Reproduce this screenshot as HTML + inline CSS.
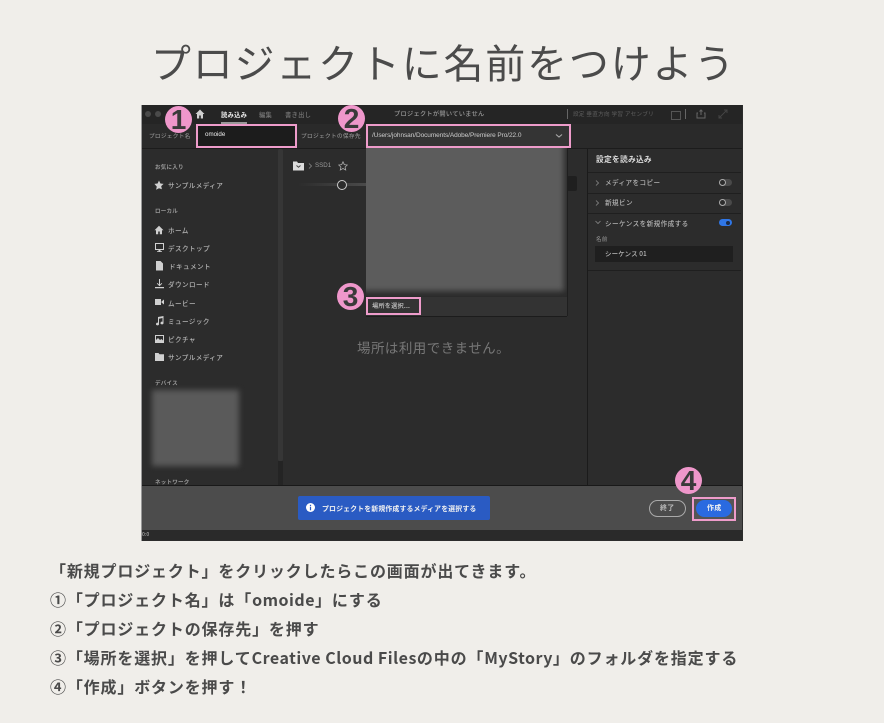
<!DOCTYPE html>
<html lang="ja"><head><meta charset="utf-8"><style>
html,body{margin:0;padding:0}
body{width:884px;height:723px;background:#f0eeea;position:relative;overflow:hidden;font-family:"Noto Sans CJK JP","Liberation Sans",sans-serif}
.a{position:absolute;white-space:nowrap}
#title{left:0;width:884px;top:31px;text-align:center;font-size:40px;line-height:60px;letter-spacing:1.8px;color:#4b4b4b;font-weight:400;text-indent:3px}
.l{left:50px;font-size:16px;line-height:22px;font-weight:700;color:#4a4a4a;letter-spacing:.84px}
.l b{letter-spacing:.5px;font-weight:700}
#w{position:absolute;left:141px;top:105px;width:602px;height:436px;background:#2c2c2c;overflow:hidden;border-left:1px solid #999;box-sizing:border-box}
#in{position:absolute;left:-142px;top:-105px;width:884px;height:723px;filter:blur(.35px)}
.r{position:absolute}
.t{position:absolute;white-space:nowrap;font-size:6.6px;line-height:12px;color:#b4b4b4;letter-spacing:.4px;font-weight:500}
.h{font-size:5.5px;font-weight:700;color:#999;letter-spacing:.25px}
.pk{position:absolute;border:2.5px solid #ee9ccb;box-sizing:border-box}
.c{position:absolute;width:27px;height:27px;border-radius:50%;background:#ef97cb;color:#3a3a3a;font:700 28px/27px "Liberation Sans",sans-serif;text-align:center}
.ic{position:absolute;fill:#d0d0d0}
.tg{position:absolute;width:13px;height:7px;border-radius:4px;background:#4a4a4a}
.tg i{position:absolute;left:0;top:0;width:7px;height:7px;box-sizing:border-box;border:1px solid #aaa;border-radius:50%;background:#2c2c2c}
.ch{position:absolute;fill:none;stroke:#888;stroke-width:.8}
</style></head><body>
<div class="a" id="title">プロジェクトに名前をつけよう</div>

<div id="w"><div id="in">
<div class="r" style="left:142px;top:105px;width:600px;height:19px;background:#252525"></div>
<div class="r" style="left:142px;top:124px;width:600px;height:24px;background:#2a2a2a;border-bottom:1px solid #1c1c1c"></div>
<div class="r" style="left:145px;top:111px;width:6px;height:6px;border-radius:50%;background:#4a4a4a"></div>
<div class="r" style="left:155px;top:111px;width:6px;height:6px;border-radius:50%;background:#4a4a4a"></div>
<svg class="ic" style="left:195px;top:109px" width="10" height="10" viewBox="0 0 10 10"><path d="M5 .5L.5 5H2v4.5h2.2V6.500h1.600v3H8V5h1.500z"/></svg>
<div class="t" style="left:221px;top:109px;font-size:6.300px;letter-spacing:.25px;color:#eee;font-weight:700">読み込み</div>
<div class="r" style="left:221px;top:122px;width:26px;height:2px;background:#999"></div>
<div class="t" style="left:259px;top:109px;font-size:6.300px;letter-spacing:.25px;color:#777">編集</div>
<div class="t" style="left:285px;top:109px;font-size:6.300px;letter-spacing:.25px;color:#777">書き出し</div>
<div class="t" style="left:394px;top:108px;font-size:6.200px;letter-spacing:.3px;color:#999">プロジェクトが開いていません</div>
<div class="r" style="left:567px;top:109px;width:1px;height:10px;background:#666"></div>
<div class="t" style="left:573px;top:108px;font-size:5.600px;letter-spacing:.3px;color:#555">設定 垂直方向 学習 アセンブリ</div>
<div class="r" style="left:671px;top:111px;width:8px;height:7px;border:1px solid #555"></div>
<div class="r" style="left:685px;top:109px;width:1px;height:10px;background:#666"></div>
<svg style="position:absolute;left:696px;top:109px" width="10" height="10" viewBox="0 0 10 10" fill="none" stroke="#666"><path d="M2 4H1v5h8V4H8M5 6V1M3.500 2.500L5 1l1.500 1.500"/></svg>
<svg style="position:absolute;left:718px;top:109px" width="10" height="10" viewBox="0 0 10 10" fill="none" stroke="#444"><path d="M1 9L9 1M6 1h3v3M1 6v3h3"/></svg>

<div class="t" style="left:149px;top:130px;font-size:5.700px;letter-spacing:.25px;color:#8a8a8a">プロジェクト名</div>
<div class="r" style="left:198px;top:126px;width:97px;height:20px;background:#1c1c1c"></div>
<div class="t" style="left:205px;top:129px;font-size:6.200px;color:#eee;letter-spacing:0;font-family:'Liberation Sans',sans-serif">omoide</div>
<div class="t" style="left:301px;top:130px;font-size:5.700px;letter-spacing:.3px;color:#8a8a8a">プロジェクトの保存先</div>
<div class="r" style="left:368px;top:126px;width:201px;height:20px;background:#343434"></div>
<div class="t" style="left:372px;top:130px;font-size:6.500px;color:#ccc;letter-spacing:-.08px;font-family:'Liberation Sans',sans-serif">/Users/johnsan/Documents/Adobe/Premiere Pro/22.0</div>
<svg style="position:absolute;left:555px;top:133px" width="8" height="6" viewBox="0 0 8 6" fill="none" stroke="#aaa" stroke-width="1.100"><path d="M1 1.500l3 2.500 3-2.500"/></svg>

<!-- sidebar -->
<div class="r" style="left:278px;top:149px;width:5px;height:312px;background:#363636;border-radius:2px"></div>
<div class="r" style="left:278px;top:461px;width:5px;height:25px;background:#242424"></div>
<div class="t h" style="left:155px;top:161px">お気に入り</div>
<svg class="ic" style="left:154px;top:180px" width="10" height="10" viewBox="0 0 10 10"><path d="M5 .5l1.400 3 3.200.4-2.400 2.200.7 3.200L5 8.200 2.100 9.800l.7-3.200L.4 3.900l3.200-.4z"/></svg>
<div class="t" style="left:168px;top:179px">サンプルメディア</div>
<div class="t h" style="left:155px;top:205px">ローカル</div>
<svg class="ic" style="left:154px;top:225px" width="10" height="10" viewBox="0 0 10 10"><path d="M5 .8L.5 5.200H2v4h2.200V6.500h1.600v2.700H8v-4h1.500z"/></svg>
<div class="t" style="left:168px;top:224px">ホーム</div>
<svg class="ic" style="left:155px;top:243px" width="9" height="10" viewBox="0 0 9 10"><path d="M0 0h9v7H5.500v1.200H7V9H2v-.8h1.500V7H0zm1 1v5h7V1z"/></svg>
<div class="t" style="left:168px;top:242px">デスクトップ</div>
<svg class="ic" style="left:156px;top:261px" width="7" height="10" viewBox="0 0 7 10"><path d="M0 0h4.500L7 2.500V9.500H0z"/></svg>
<div class="t" style="left:169px;top:260px">ドキュメント</div>
<svg class="ic" style="left:155px;top:279px" width="9" height="10" viewBox="0 0 9 10"><path d="M4 0h1v5.500l1.500-1.500.7.600L4.500 7.300 1.800 4.600l.7-.6L4 5.500zM0 8h9v1.200H0z"/></svg>
<div class="t" style="left:168px;top:278px">ダウンロード</div>
<svg class="ic" style="left:155px;top:298px" width="9" height="8" viewBox="0 0 9 8"><path d="M0 1h6v6H0zM6.500 3.500L9 1.500v5L6.500 4.500z"/></svg>
<div class="t" style="left:168px;top:297px">ムービー</div>
<svg class="ic" style="left:155px;top:316px" width="9" height="10" viewBox="0 0 9 10"><path d="M3 1l5.500-1v7a1.500 1.300 0 1 1-1-1.200V2L4 2.700V8a1.500 1.300 0 1 1-1-1.200z"/></svg>
<div class="t" style="left:168px;top:315px">ミュージック</div>
<svg class="ic" style="left:155px;top:335px" width="9" height="8" viewBox="0 0 9 8"><path d="M0 0h9v8H0zm1 1v4l2-2 2 2 1.500-1L8 5.500V1z"/></svg>
<div class="t" style="left:168px;top:333px">ピクチャ</div>
<svg class="ic" style="left:155px;top:353px" width="9" height="8" viewBox="0 0 9 8"><path d="M0 0h3.500l1 1.200H9V8H0z"/></svg>
<div class="t" style="left:168px;top:351px">サンプルメディア</div>
<div class="t h" style="left:155px;top:377px">デバイス</div>
<div class="r" style="left:152px;top:390px;width:87px;height:76px;background:#5a5a5a;filter:blur(3px)"></div>
<div class="t h" style="left:155px;top:476px">ネットワーク</div>

<!-- main -->
<svg style="position:absolute;left:293px;top:161px" width="11" height="10" viewBox="0 0 11 10"><path d="M0 .5h4l1 1.500h6v7.500H0z" fill="#ddd"/><path d="M3.500 4.500l2 1.700 2-1.700" stroke="#444" fill="none"/></svg>
<svg class="ch" style="left:308px;top:163px" width="5" height="6" viewBox="0 0 5 6"><path d="M1 .5L3.500 3 1 5.500"/></svg>
<div class="t" style="left:315px;top:160px;font-size:6.200px;letter-spacing:0;color:#999;font-family:'Liberation Sans',sans-serif">SSD1</div>
<svg style="position:absolute;left:338px;top:161px" width="10" height="10" viewBox="0 0 10 10" fill="none" stroke="#aaa" stroke-width=".8"><path d="M5 .8l1.300 2.800 3 .4-2.200 2 .6 3L5 7.500 2.300 9l.6-3-2.200-2 3-.4z"/></svg>
<div class="r" style="left:298px;top:183px;width:68px;height:3px;background:linear-gradient(90deg,#2c2c2c,#4a4a4a)"></div>
<div class="r" style="left:337px;top:180px;width:8px;height:8px;border:1px solid #ccc;border-radius:50%;background:#2c2c2c"></div>
<div class="r" style="left:567px;top:176px;width:10px;height:15px;background:#1f1f1f;border-radius:2px"></div>
<div class="t" style="left:357px;top:337px;font-size:13.500px;line-height:20px;letter-spacing:.45px;color:#777;font-weight:400">場所は利用できません。</div>

<!-- popup -->
<div class="r" style="left:366px;top:148px;width:201px;height:149px;background:#2b2b2b;overflow:hidden"><div class="r" style="left:-6px;top:-10px;width:204px;height:153px;background:#5c5c5c;filter:blur(3px)"></div></div>
<div class="r" style="left:366px;top:297px;width:201px;height:19px;background:#333;border-bottom:1px solid #1c1c1c"></div>
<div class="r" style="left:567px;top:148px;width:1px;height:168px;background:#1f1f1f"></div>
<div class="t" style="left:372px;top:300px;font-size:6.200px;color:#ccc;letter-spacing:.2px">場所を選択...</div>

<!-- right panel -->
<div class="r" style="left:587px;top:149px;width:1px;height:337px;background:#1b1b1b"></div>
<div class="t" style="left:596px;top:154px;font-size:7.700px;letter-spacing:.3px;font-weight:700;color:#ddd">設定を読み込み</div>
<div class="r" style="left:588px;top:172px;width:153px;height:1px;background:#1f1f1f"></div>
<svg class="ch" style="left:595px;top:180px" width="5" height="6" viewBox="0 0 5 6"><path d="M1 .5L3.500 3 1 5.500"/></svg>
<div class="t" style="left:605px;top:176px;color:#b4b4b4">メディアをコピー</div>
<div class="tg" style="left:719px;top:179px"><i></i></div>
<div class="r" style="left:588px;top:193px;width:153px;height:1px;background:#1f1f1f"></div>
<svg class="ch" style="left:595px;top:200px" width="5" height="6" viewBox="0 0 5 6"><path d="M1 .5L3.500 3 1 5.500"/></svg>
<div class="t" style="left:605px;top:196px;color:#b4b4b4">新規ビン</div>
<div class="tg" style="left:719px;top:199px"><i></i></div>
<div class="r" style="left:588px;top:213px;width:153px;height:1px;background:#1f1f1f"></div>
<svg style="position:absolute;left:595px;top:220px" width="6" height="5" viewBox="0 0 6 5" fill="none" stroke="#888" stroke-width=".8"><path d="M.5 1l2.500 2.500L5.500 1"/></svg>
<div class="t" style="left:605px;top:217px;color:#b4b4b4">シーケンスを新規作成する</div>
<div class="tg" style="left:719px;top:219px;background:#2f76e6"><i style="left:7px;top:1.500px;width:4px;height:4px;background:#1b2a44;border:0"></i></div>
<div class="t" style="left:596px;top:233px;font-size:5.500px;color:#888">名前</div>
<div class="r" style="left:595px;top:246px;width:138px;height:16px;background:#1f1f1f"></div>
<div class="t" style="left:605px;top:247px;font-size:6.500px;letter-spacing:.1px;color:#bbb">シーケンス 01</div>
<div class="r" style="left:588px;top:270px;width:153px;height:1px;background:#1f1f1f"></div>

<!-- bottom -->
<div class="r" style="left:142px;top:485px;width:600px;height:1px;background:#191919"></div>
<div class="r" style="left:142px;top:486px;width:600px;height:44px;background:#4c4c4c"></div>
<div class="r" style="left:142px;top:530px;width:600px;height:10px;background:#2a2a2a"></div>
<div class="t" style="left:142px;top:530px;font-size:5px;line-height:10px;color:#aaa;letter-spacing:0">0:0</div>
<div class="r" style="left:298px;top:496px;width:192px;height:24px;background:#2a5bc3;border-radius:2px"></div>
<svg style="position:absolute;left:306px;top:503px" width="9" height="9" viewBox="0 0 9 9"><circle cx="4.500" cy="4.500" r="4.500" fill="#fff"/><rect x="3.900" y="3.700" width="1.200" height="3.600" fill="#2a5bc3"/><rect x="3.900" y="1.800" width="1.200" height="1.200" fill="#2a5bc3"/></svg>
<div class="t" style="left:322px;top:502px;font-size:6.900px;font-weight:700;color:#f2f2f2;letter-spacing:.15px">プロジェクトを新規作成するメディアを選択する</div>
<div class="r" style="left:649px;top:500px;width:37px;height:17px;box-sizing:border-box;border:1px solid #aaa;border-radius:9px"></div>
<div class="t" style="left:660px;top:502px;font-size:7px;letter-spacing:.2px;font-weight:700;color:#bbb">終了</div>
<div class="r" style="left:694px;top:499px;width:40px;height:20px;background:#555"></div>
<div class="r" style="left:696px;top:500px;width:36px;height:17px;background:#2a6ae0;border-radius:9px"></div>
<div class="t" style="left:707px;top:502px;font-size:7px;letter-spacing:.2px;font-weight:700;color:#f2f2f2">作成</div>

<!-- annotations -->
<div class="pk" style="left:196px;top:124px;width:101px;height:23.500px"></div>
<div class="pk" style="left:366px;top:124px;width:205px;height:23.500px"></div>
<div class="pk" style="left:366px;top:297px;width:55px;height:18px"></div>
<div class="pk" style="left:692px;top:497px;width:44px;height:24px"></div>
<div class="c" style="left:165px;top:106px">1</div>
<div class="c" style="left:338px;top:105px">2</div>
<div class="c" style="left:337px;top:283px">3</div>
<div class="c" style="left:675px;top:467px">4</div>
</div></div>

<div class="a l" style="left:50px;top:559px">「新規プロジェクト」をクリックしたらこの画面が出てきます。</div>
<div class="a l" style="top:588px">①「プロジェクト名」は「<b>omoide</b>」にする</div>
<div class="a l" style="top:617px">②「プロジェクトの保存先」を押す</div>
<div class="a l" style="top:646px">③「場所を選択」を押して<b>Creative Cloud Files</b>の中の「<b>MyStory</b>」のフォルダを指定する</div>
<div class="a l" style="top:675px">④「作成」ボタンを押す！</div>
</body></html>
